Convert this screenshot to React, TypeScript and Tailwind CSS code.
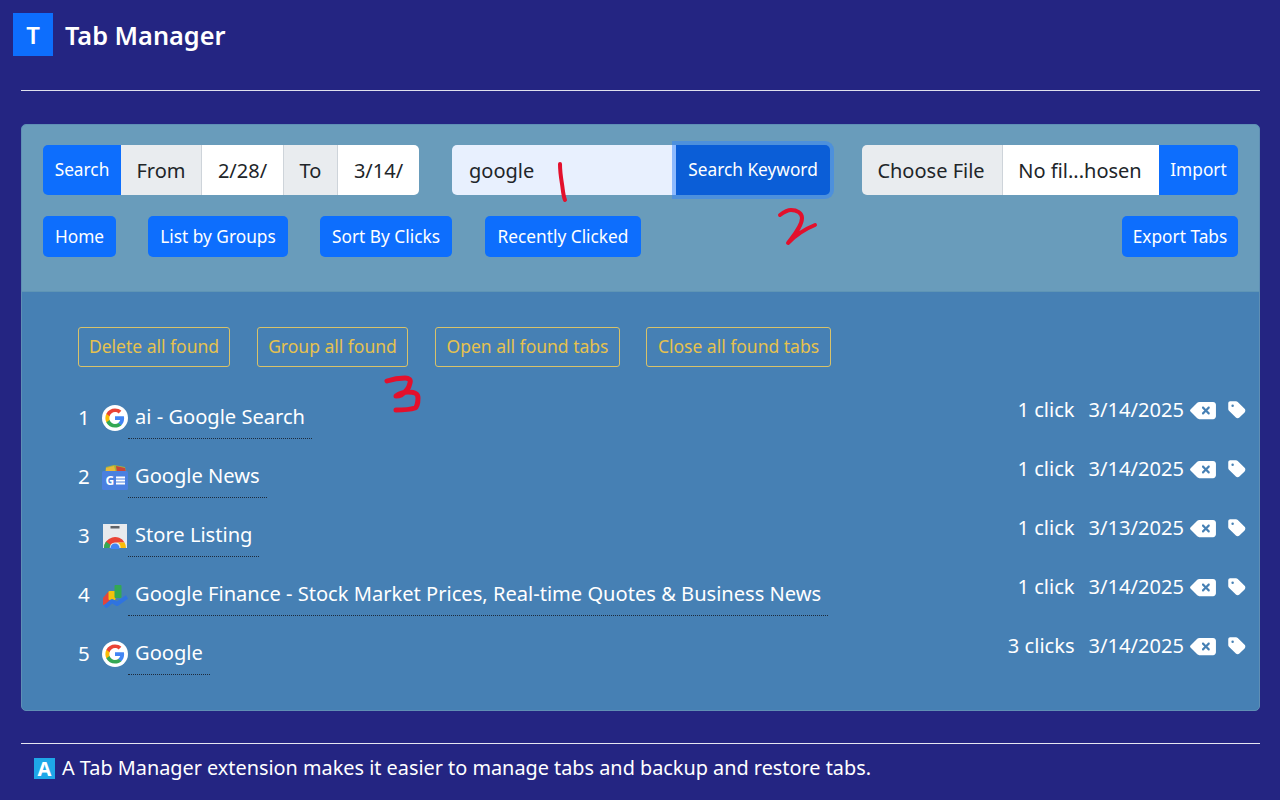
import { FaDeleteLeft, FaTag } from "react-icons/fa6";

const sans = "font-['Noto_Sans',sans-serif]";
const btnBase = "flex items-center justify-center text-[17.3px] text-white";
const btn = `${btnBase} rounded-[5px] bg-[#0d6efd]`;
const addon = "flex items-center justify-center bg-[#e9ecef] pt-px text-[20px] text-[#212529]";
const field = "flex items-center justify-center border-l border-[#ced4da] bg-white pt-px text-[20px] text-[#212529]";
const outline = "flex h-10 items-center justify-center rounded-[3px] border border-[#d8c26a] pb-[2px] text-[17.5px] text-[#e6c24e]";

function GoogleIcon() {
  return (
    <svg viewBox="0 0 26 26" className="h-[26px] w-[26px] shrink-0">
      <circle cx="13" cy="13" r="13" fill="#fff" />
      <g transform="translate(13 13) scale(1.2) translate(-13 -13)">
        <path d="M20.6 13.2c0-.6-.1-1.100-.2-1.600H13v3h4.300c-.2 1-.8 1.800-1.600 2.400v2h2.600c1.500-1.400 2.300-3.400 2.300-5.800z" fill="#4285f4" />
        <path d="M13 21c2.200 0 4-.7 5.300-1.900l-2.600-2c-.7.5-1.600.8-2.700.8-2.100 0-3.900-1.400-4.500-3.300H5.800v2.100C7.100 19.300 9.900 21 13 21z" fill="#34a853" />
        <path d="M8.500 14.600c-.3-1-.3-2.100 0-3.100V9.400H5.800c-1.100 2.200-1.100 5 0 7.200l2.700-2z" fill="#fbbc05" />
        <path d="M13 8.100c1.200 0 2.200.4 3 1.200l2.300-2.300C16.900 5.700 15.100 5 13 5 9.900 5 7.100 6.700 5.800 9.400l2.700 2.100c.6-1.900 2.400-3.400 4.500-3.400z" fill="#ea4335" />
      </g>
    </svg>
  );
}

function NewsIcon() {
  return (
    <svg viewBox="0 0 26 26" className="h-[26px] w-[26px] shrink-0">
      <path d="M3 9 4 3 12 1l11 2 1 6z" fill="#a7b43a" />
      <path d="M14 2l9 2 1 5H15z" fill="#c8453b" />
      <path d="M4 4l8-2 2 7H4z" fill="#e8b93a" />
      <rect x="0" y="7" width="26" height="19" rx="1.500" fill="#4a80e0" />
      <text x="3.500" y="21" fontSize="12" fontWeight="700" fill="#fff" fontFamily="'Noto Sans',sans-serif">G</text>
      <path d="M14 13.500h9M14 16.500h9M14 19.500h9" stroke="#fff" strokeWidth="1.800" />
    </svg>
  );
}

function StoreIcon() {
  return (
    <svg viewBox="0 0 26 26" className="h-[26px] w-[26px] shrink-0">
      <rect x="1" y="1" width="24" height="24" fill="#e8eaed" />
      <rect x="8.500" y="3" width="9" height="2.500" fill="#5f6368" />
      <path d="M2 25a11 11 0 0 1 20.500-5.500H13a5.500 5.500 0 0 0-5.500 5.500z" fill="#ea4335" />
      <path d="M22.500 19.500a11 11 0 0 1 1.500 5.500h-5.500a5.500 5.500 0 0 0-3-5.500z" fill="#fbbc05" />
      <path d="M2 25a11 11 0 0 1 2-6.500l4.500 3.500a5.500 5.500 0 0 0-1 3z" fill="#34a853" />
      <circle cx="13" cy="25" r="4.500" fill="#4285f4" />
    </svg>
  );
}

function FinanceIcon() {
  return (
    <svg viewBox="0 0 26 26" className="h-[26px] w-[26px] shrink-0">
      <path d="M1 23v-7l5-6h2v11z" fill="#e2453c" />
      <rect x="6.500" y="9" width="7" height="9" rx="1" fill="#f4c20d" />
      <rect x="12.500" y="3" width="7" height="13" rx="1" fill="#34a853" />
      <path d="M3 25l7-6 5 3 10-7" fill="none" stroke="#2f73e0" strokeWidth="4" strokeLinejoin="round" />
    </svg>
  );
}

const rows = [
  { icon: <GoogleIcon />, title: "ai - Google Search", clicks: "1 click", date: "3/14/2025" },
  { icon: <NewsIcon />, title: "Google News", clicks: "1 click", date: "3/14/2025" },
  { icon: <StoreIcon />, title: "Store Listing", clicks: "1 click", date: "3/13/2025" },
  { icon: <FinanceIcon />, title: "Google Finance - Stock Market Prices, Real-time Quotes & Business News", clicks: "1 click", date: "3/14/2025" },
  { icon: <GoogleIcon />, title: "Google", clicks: "3 clicks", date: "3/14/2025" },
];

export default function App() {
  return (
    <div className={`relative flex h-[800px] w-[1280px] flex-col overflow-hidden bg-[#242582] text-white ${sans}`}>
      {/* Header */}
      <header className="flex h-[90px] items-start gap-3 pl-[13px] pt-[13px]">
        <div className="flex h-[43px] w-10 items-center justify-center bg-[#0d6efd] text-[24px] font-semibold">T</div>
        <h1 className="text-[25.3px] font-semibold leading-[45px]">Tab Manager</h1>
      </header>
      <hr className="ml-[21px] mr-5 border-t border-[#dfe0ee]" />

      {/* Main card */}
      <main className="ml-[21px] mr-5 mt-[33px] h-[587px] overflow-hidden rounded-[5px] border border-[#5f8fb5] bg-[#4680b4]">
        <section className="h-[167px] border-b border-[#5f95b5] bg-[#699cbb] px-[21px] pt-5">
          <div className="flex h-[50px]">
            <div className="flex overflow-hidden rounded-[5px]">
              <button className={`${btnBase} w-[78px] bg-[#0d6efd]`}>Search</button>
              <span className={`${addon} w-20`}>From</span>
              <span className={`${field} w-[82px]`}>2/28/</span>
              <span className={`${addon} w-[54px] border-l border-[#ced4da]`}>To</span>
              <span className={`${field} w-[82px]`}>3/14/</span>
            </div>
            <div className="ml-[33px] flex">
              <div className="flex w-56 items-center rounded-l-[5px] bg-[#e8f0fe] pl-[17px] pt-[2px] text-[20px] text-[#212529]">google</div>
              <button className={`${btnBase} relative z-10 w-[154px] rounded-r-[5px] bg-[#0b5ed7] shadow-[0_0_0_4px_rgba(49,132,253,0.5)]`}>Search Keyword</button>
            </div>
            <div className="ml-8 flex overflow-hidden rounded-[5px]">
              <span className={`${addon} w-[140px] pr-[2px]`}>Choose File</span>
              <span className={`${field} w-[157px] pr-[2px]`}>No fil...hosen</span>
              <button className={`${btnBase} w-[79px] bg-[#0d6efd]`}>Import</button>
            </div>
          </div>
          <div className="mt-[21px] flex h-[41px]">
            <button className={`${btn} w-[73px]`}>Home</button>
            <button className={`${btn} ml-8 w-[140px]`}>List by Groups</button>
            <button className={`${btn} ml-8 w-[132px]`}>Sort By Clicks</button>
            <button className={`${btn} ml-[33px] w-[156px]`}>Recently Clicked</button>
            <button className={`${btn} ml-auto w-[116px]`}>Export Tabs</button>
          </div>
        </section>

        <section className="pl-14 pr-3 pt-[35px]">
          <div className="flex">
            <button className={`${outline} w-[152px]`}>Delete all found</button>
            <button className={`${outline} ml-[27px] w-[151px]`}>Group all found</button>
            <button className={`${outline} ml-[27px] w-[185px]`}>Open all found tabs</button>
            <button className={`${outline} ml-[26px] w-[185px]`}>Close all found tabs</button>
          </div>
          <ul className="mt-[30px]">
            {rows.map((row, i) => (
              <li key={i} className="flex h-[59px] items-start justify-between">
                <div className="flex items-center">
                  <span className="w-6 pb-[2px] text-[20.5px] leading-[39px]">{i + 1}</span>
                  {row.icon}
                  <a className="inline-block border-b border-dotted border-[#1d2b3c] px-[7px] pb-[2px] text-[20.1px] leading-[39px]">{row.title}</a>
                </div>
                <div className="flex h-[26px] items-center text-[20.1px]">
                  <span>{row.clicks}</span>
                  <span className="ml-[14px]">{row.date}</span>
                  <FaDeleteLeft className="ml-[6px] h-[23px] w-[26px]" />
                  <FaTag className="ml-[11px] h-5 w-5" />
                </div>
              </li>
            ))}
          </ul>
        </section>
      </main>

      {/* Footer */}
      <hr className="ml-[21px] mr-5 mt-8 border-t border-[#e6e6f2]" />
      <footer className="flex items-center pl-[34px] pt-[13px] text-[19.85px] leading-[21px]">
        <span className="mr-[7px] flex h-[21px] w-[21px] items-center justify-center bg-[#1ea7e8] text-[20px] font-bold text-white">A</span>
        <span className="pb-[2px]">A Tab Manager extension makes it easier to manage tabs and backup and restore tabs.</span>
      </footer>

      {/* Red pen marks on top of the screenshot */}
      <svg viewBox="0 0 1280 800" className="pointer-events-none absolute inset-0 h-[800px] w-[1280px]" fill="none" stroke="#e3102c" strokeLinecap="round" strokeLinejoin="round">
        <path d="M560 164c0 8 1 14 2 20s1 11 3 16" strokeWidth="4" />
        <path d="M780 215c4-3 8-5 11-5 6 0 11 3 11 8 0 8-8 17-14 25 6-6 17-14 27-18" strokeWidth="4" />
        <path d="M387 381c6-2 13-3 18-3 4 0 6 2 5 5-1 5-4 9-9 12-2 1-4 1-5 1 4-3 8-4 12-4 6 0 10 1 10 6 0 4-1 9-3 10-6 2-14 2-19 2" strokeWidth="5" />
      </svg>
    </div>
  );
}
